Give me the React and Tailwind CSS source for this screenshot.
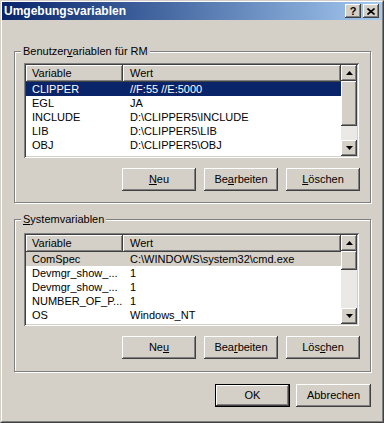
import React from 'react';

const raised =
  'shadow-[inset_-1px_-1px_#404040,inset_1px_1px_#ffffff,inset_-2px_-2px_#808080]';

const Btn = ({ children, className = '' }) => (
  <div
    className={`flex h-[23px] w-[74px] items-center justify-center bg-[#d4d0c8] ${raised} ${className}`}
  >
    {children}
  </div>
);

const Arrow = ({ up }) => (
  <div className={`flex h-[16px] w-[16px] shrink-0 items-center justify-center bg-[#d4d0c8] ${raised}`}>
    <svg width="7" height="4" viewBox="0 0 7 4">
      {up ? <path d="M3.5 0 L7 4 L0 4 Z" fill="#000" /> : <path d="M0 0 L7 0 L3.5 4 Z" fill="#000" />}
    </svg>
  </div>
);

const Row = ({ name, value, mode }) => {
  const cls =
    mode === 'focus'
      ? 'bg-[#0a246a] text-white'
      : mode === 'gray'
      ? 'bg-[#d4d0c8] text-black'
      : 'text-black';
  return (
    <div className={`flex h-[14px] shrink-0 items-center leading-none whitespace-nowrap ${cls}`}>
      <div className="w-[97px] pl-[6px]">{name}</div>
      <div className="pl-[7px]">{value}</div>
    </div>
  );
};

const ListView = ({ rows, height, thumb }) => (
  <div
    className={`flex bg-white p-[2px] shadow-[inset_1px_1px_#808080,inset_-1px_-1px_#ffffff,inset_2px_2px_#404040,inset_-2px_-2px_#d4d0c8] w-[335px] ${height}`}
  >
    <div className="flex min-w-0 flex-1 flex-col overflow-hidden">
      <div className="flex h-[17px] shrink-0 bg-[#d4d0c8]">
        <div className={`flex w-[97px] items-center pl-[6px] ${raised}`}>Variable</div>
        <div className={`flex flex-1 items-center pl-[7px] ${raised}`}>Wert</div>
      </div>
      {rows.map((r, i) => (
        <Row key={i} name={r[0]} value={r[1]} mode={r[2]} />
      ))}
    </div>
    <div className="flex w-[16px] flex-col">
      <Arrow up />
      <div className="flex flex-1 flex-col bg-[#ebe9e5]">
        <div className={`shrink-0 bg-[#d4d0c8] ${raised} ${thumb}`} />
      </div>
      <Arrow />
    </div>
  </div>
);

const Group = ({ label, children, className = '' }) => (
  <div
    className={`relative ml-[12px] w-[357px] shrink-0 border border-[#808080] shadow-[inset_1px_1px_#ffffff,1px_1px_#ffffff] ${className}`}
  >
    <span className="absolute left-[6px] top-[-8px] bg-[#d4d0c8] px-[2px] leading-[14px]">{label}</span>
    {children}
  </div>
);

export default function App() {
  return (
    <div
      className="h-[423px] w-[384px] border border-t-[#d4d0c8] border-l-[#d4d0c8] border-r-[#404040] border-b-[#404040] bg-[#d4d0c8] text-[11px] text-black"
      style={{ fontFamily: '"Liberation Sans", Arial, sans-serif' }}
    >
      <div className="flex h-full flex-col border border-t-white border-l-white border-r-[#808080] border-b-[#808080]">
        {/* title bar */}
        <div className="flex h-[18px] shrink-0 items-center justify-between bg-linear-to-r from-[#0a246a] to-[#a6caf0] pl-[2px] pr-[3px]">
          <span className="text-[12px] font-bold text-white">Umgebungsvariablen</span>
          <div className="flex gap-[2px]">
            <div className={`flex h-[14px] w-[16px] items-center justify-center bg-[#d4d0c8] text-[11px] font-bold leading-none ${raised}`}>
              ?
            </div>
            <div className={`flex h-[14px] w-[16px] items-center justify-center bg-[#d4d0c8] ${raised}`}>
              <svg width="8" height="7" viewBox="0 0 8 7">
                <path d="M0.5 0.5 L7.5 6.5 M7.5 0.5 L0.5 6.5" stroke="#000" strokeWidth="1.6" />
              </svg>
            </div>
          </div>
        </div>

        <Group
          className="mt-[31px] h-[152px] pl-[9px] pt-[11px]"
          label={
            <>
              Benutzer<u>v</u>ariablen für RM
            </>
          }
        >
          <ListView
            height="h-[95px]"
            thumb="h-[45px]"
            rows={[
              ['CLIPPER', '//F:55 //E:5000', 'focus'],
              ['EGL', 'JA'],
              ['INCLUDE', 'D:\\CLIPPER5\\INCLUDE'],
              ['LIB', 'D:\\CLIPPER5\\LIB'],
              ['OBJ', 'D:\\CLIPPER5\\OBJ'],
              ['', ''],
            ]}
          />
          <div className="mt-[10px] flex justify-end gap-[8px] pr-[10px]">
            <Btn>
              <u>N</u>eu
            </Btn>
            <Btn>
              Be<u>a</u>rbeiten
            </Btn>
            <Btn>
              <u>L</u>öschen
            </Btn>
          </div>
        </Group>

        <Group
          className="mt-[16px] h-[153px] pl-[9px] pt-[13px]"
          label={
            <>
              <u>S</u>ystemvariablen
            </>
          }
        >
          <ListView
            height="h-[93px]"
            thumb="h-[19px]"
            rows={[
              ['ComSpec', 'C:\\WINDOWS\\system32\\cmd.exe', 'gray'],
              ['Devmgr_show_...', '1'],
              ['Devmgr_show_...', '1'],
              ['NUMBER_OF_P...', '1'],
              ['OS', 'Windows_NT'],
              ['', ''],
            ]}
          />
          <div className="mt-[10px] flex justify-end gap-[8px] pr-[10px]">
            <Btn>
              Ne<u>u</u>
            </Btn>
            <Btn>
              Bea<u>r</u>beiten
            </Btn>
            <Btn>
              Lös<u>c</u>hen
            </Btn>
          </div>
        </Group>

        <div className="mt-[12px] flex justify-end gap-[6px] pr-[11px]">
          <Btn className="w-[75px] border border-black">OK</Btn>
          <Btn className="w-[75px]">Abbrechen</Btn>
        </div>
      </div>
    </div>
  );
}
